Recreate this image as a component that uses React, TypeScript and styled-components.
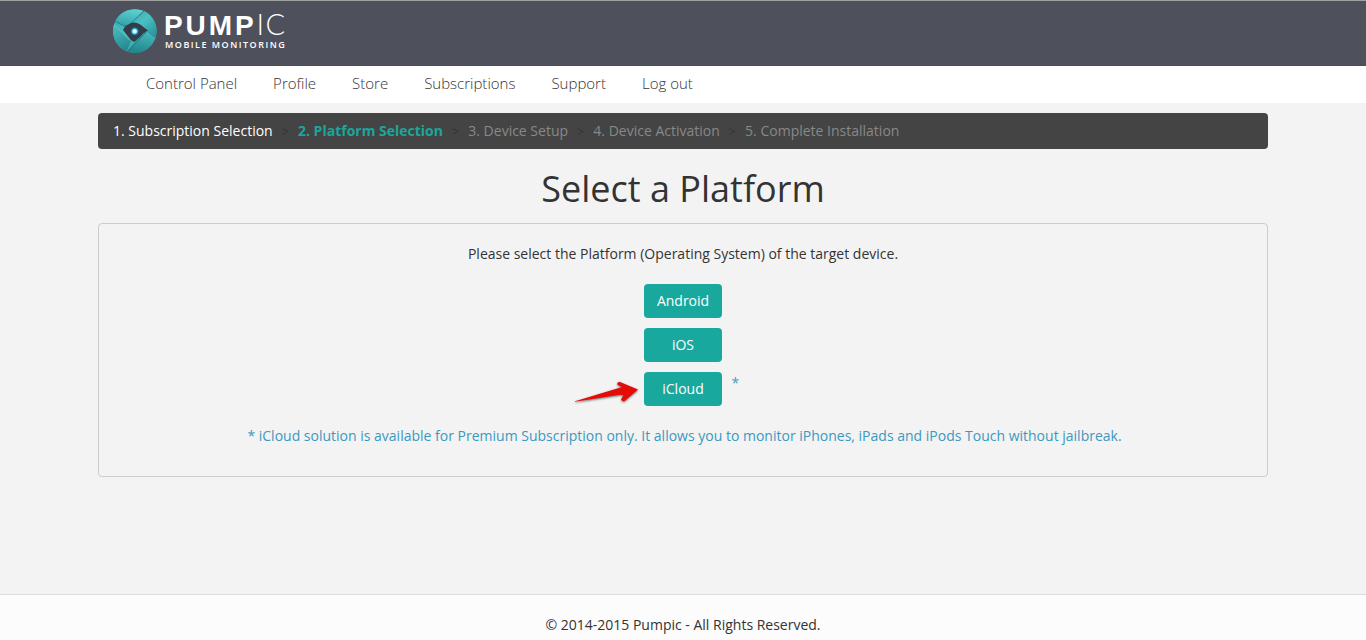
import React from "react";
import styled, { createGlobalStyle, css } from "styled-components";

const GlobalStyle = createGlobalStyle`
  *, *::before, *::after { box-sizing: border-box; }
  body {
    margin: 0;
    background: #f3f3f3;
    color: #333;
    font: 14px/20px "Open Sans", "Noto Sans", sans-serif;
  }
`;

const Page = styled.div`
  display: flex;
  flex-direction: column;
  height: 640px;
  overflow: hidden;
`;

const Container = styled.div`
  width: 1170px;
  margin: 0 auto;
`;

const Header = styled.header`
  height: 66px;
  background: #4e505c;
  border-top: 1px solid #a0a19f;
  border-bottom: 1px solid #494b56;
`;

const Brand = styled.a`
  display: flex;
  gap: 8px;
  padding: 8px 0 0 15px;
`;

const Wordmark = styled.span`
  display: flex;
  flex-direction: column;
  color: #fff;
  white-space: nowrap;
`;

const BrandName = styled.span`
  display: flex;
  align-items: baseline;
  height: 31px;
  font: 700 28px/29px "Liberation Sans", Arial, sans-serif;
  letter-spacing: 2.9px;
  margin-left: -1px;
`;

const BrandSuffix = styled.span`
  font-family: Lato, sans-serif;
  font-size: 29px;
  font-weight: 300;
  letter-spacing: 1.4px;
`;

const Tagline = styled.span`
  height: 10px;
  font-size: 9px;
  font-weight: 600;
  line-height: 9px;
  letter-spacing: 1.5px;
`;

const NavBar = styled.nav`
  height: 37px;
  background: #fff;
`;

const NavList = styled(Container)`
  display: flex;
  gap: 36px;
  padding: 7px 0 0 48px;
`;

const NavLink = styled.a`
  color: #333;
  font-size: 15px;
  font-weight: 300;
  line-height: 20px;
`;

const Main = styled.main`
  flex: 1;
  width: 1170px;
  margin: 0 auto;
  padding-top: 10px;
`;

const Steps = styled.ol`
  display: flex;
  align-items: center;
  height: 36px;
  margin: 0;
  padding: 0 15px;
  list-style: none;
  background: #444;
  border-radius: 4px;
`;

type StepState = "done" | "current" | "pending";

const stepStyles = {
  done: css`color: #fff;`,
  current: css`color: #1aa79c; font-weight: 700;`,
  pending: css`color: #888;`,
};

const Step = styled.li<{ $state: StepState }>`
  ${({ $state }) => stepStyles[$state]}

  &:not(:first-child)::before {
    content: ">";
    display: inline-block;
    width: 25.3px;
    color: #333;
    font-size: 12px;
    font-weight: 400;
    text-align: center;
  }
`;

const Title = styled.h1`
  margin: 20px 0 14px;
  font-size: 36px;
  font-weight: 400;
  line-height: 40px;
  text-align: center;
`;

const Panel = styled.section`
  display: flex;
  flex-direction: column;
  align-items: center;
  height: 254px;
  padding-top: 20px;
  border: 1px solid #ccc;
  border-radius: 4px;
`;

const Prompt = styled.p`
  margin: 0 0 20px;
`;

const Options = styled.div`
  display: flex;
  flex-direction: column;
  gap: 10px;
`;

const Option = styled.div`
  position: relative;
`;

const PlatformButton = styled.button`
  display: block;
  width: 78px;
  height: 34px;
  padding: 0;
  border: 0;
  border-radius: 4px;
  background: #19a89d;
  color: #fff;
  font: inherit;
`;

const Asterisk = styled.span`
  position: absolute;
  top: 1px;
  left: 87.6px;
  color: #4a9dc0;
`;

const Pointer = styled.svg`
  position: absolute;
  top: 6px;
  left: -72px;
  filter: drop-shadow(0 1px 1px rgba(0, 0, 0, 0.55));
`;

const Note = styled.p`
  margin: 20px 0 0 3px;
  color: #3a99c0;
`;

const Footer = styled.footer`
  height: 46px;
  padding-top: 20px;
  background: #fcfcfc;
  border-top: 1px solid #dcdcdc;
  text-align: center;
`;

const Aperture = () => (
  <svg width="44" height="44" viewBox="0 3 44 44" aria-hidden="true">
    <defs>
      <linearGradient id="top" x1="0.6" y1="0" x2="0.2" y2="1">
        <stop offset="0" stopColor="#5fd0d2" />
        <stop offset="1" stopColor="#2f9fa4" />
      </linearGradient>
      <linearGradient id="left" x1="0" y1="0" x2="0.3" y2="1">
        <stop offset="0" stopColor="#4cc3c6" />
        <stop offset="1" stopColor="#26898f" />
      </linearGradient>
      <linearGradient id="bottom" x1="0.6" y1="0" x2="0.3" y2="1">
        <stop offset="0" stopColor="#48bbbf" />
        <stop offset="1" stopColor="#1e8489" />
      </linearGradient>
      <linearGradient id="right" x1="0" y1="0" x2="0.8" y2="1">
        <stop offset="0" stopColor="#379da2" />
        <stop offset="0.5" stopColor="#4bc0c3" />
        <stop offset="1" stopColor="#27949a" />
      </linearGradient>
      <radialGradient id="glow">
        <stop offset="0" stopColor="#fff" />
        <stop offset="0.4" stopColor="#c9faff" />
        <stop offset="0.65" stopColor="#16a9d3" />
        <stop offset="1" stopColor="#16a9d3" stopOpacity="0" />
      </radialGradient>
      <clipPath id="disc"><circle cx="21.8" cy="25" r="21.8" /></clipPath>
    </defs>
    <g clipPath="url(#disc)">
      <rect y="3" width="44" height="44" fill="url(#right)" />
      <path d="M0 3H33L16 19L11 20L2 15Z" fill="url(#top)" />
      <path d="M32 3L15 19Q20 16 26 18L44 33V3Z" fill="url(#right)" />
      <path d="M0 17L18 35L13 47L0 45Z" fill="url(#left)" />
      <path d="M13 47L33 26L34 24L44 32V47Z" fill="url(#bottom)" />
      <path d="M2 15L11 20L16 19L32 4" fill="none" stroke="#1f767c" strokeWidth="0.8" />
      <path d="M26 18L44 33" fill="none" stroke="#1f767c" strokeWidth="0.8" />
      <path d="M13 47L33 26" fill="none" stroke="#1b6b71" strokeWidth="0.9" />
      <path d="M0 17.5L17 34.5" fill="none" stroke="#75d6d6" strokeWidth="0.6" />
      <path d="M10 24L12 20.5L17 17.5Q22 15 27 18.5L35 24.5Q31 26 27.5 30.5L22 35.5Q20 36.5 17 33Z" fill="#353c49" />
    </g>
    <circle cx="21.7" cy="25.3" r="4.4" fill="url(#glow)" />
  </svg>
);

const navItems = ["Control Panel", "Profile", "Store", "Subscriptions", "Support", "Log out"];

const steps: { label: string; state: StepState }[] = [
  { label: "1. Subscription Selection", state: "done" },
  { label: "2. Platform Selection", state: "current" },
  { label: "3. Device Setup", state: "pending" },
  { label: "4. Device Activation", state: "pending" },
  { label: "5. Complete Installation", state: "pending" },
];

export default function App() {
  return (
    <Page>
      <GlobalStyle />
      <Header>
        <Container>
          <Brand>
            <Aperture />
            <Wordmark>
              <BrandName>PUMP<BrandSuffix>IC</BrandSuffix></BrandName>
              <Tagline>MOBILE MONITORING</Tagline>
            </Wordmark>
          </Brand>
        </Container>
      </Header>
      <NavBar>
        <NavList>
          {navItems.map((item) => <NavLink key={item}>{item}</NavLink>)}
        </NavList>
      </NavBar>
      <Main>
        <Steps>
          {steps.map(({ label, state }) => <Step key={label} $state={state}>{label}</Step>)}
        </Steps>
        <Title>Select a Platform</Title>
        <Panel>
          <Prompt>Please select the Platform (Operating System) of the target device.</Prompt>
          <Options>
            <Option><PlatformButton>Android</PlatformButton></Option>
            <Option><PlatformButton>iOS</PlatformButton></Option>
            <Option>
              <Pointer width="68" height="28" viewBox="0 0 68 28">
                <path d="M3 23.3L46 10.2L50 9L45.5 6.8Q44.5 3.5 48 4L66 11.5L53.5 22.3Q51 24.5 49 21.5L51.5 17.3L48 16.7L3 23.8Z" fill="#e50b07" />
              </Pointer>
              <PlatformButton>iCloud</PlatformButton>
              <Asterisk>*</Asterisk>
            </Option>
          </Options>
          <Note>* iCloud solution is available for Premium Subscription only. It allows you to monitor iPhones, iPads and iPods Touch without jailbreak.</Note>
        </Panel>
      </Main>
      <Footer>© 2014-2015 Pumpic - All Rights Reserved.</Footer>
    </Page>
  );
}
